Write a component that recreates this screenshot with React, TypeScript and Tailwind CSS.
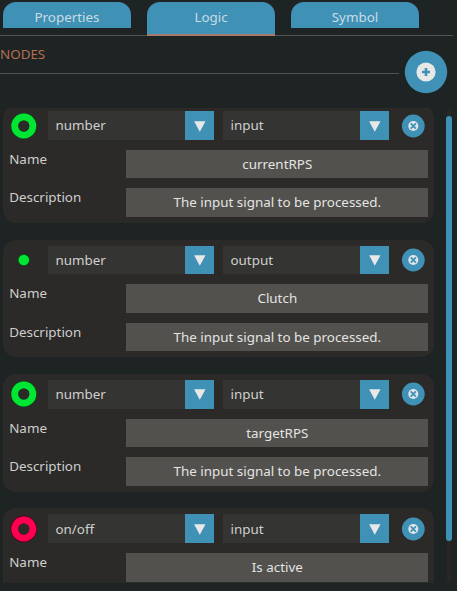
type NodeData = { type: string; mode: 'input' | 'output'; name: string; description?: string; on?: boolean };

const nodes: NodeData[] = [
  { type: 'number', mode: 'input', name: 'currentRPS', description: 'The input signal to be processed.' },
  { type: 'number', mode: 'output', name: 'Clutch', description: 'The input signal to be processed.' },
  { type: 'number', mode: 'input', name: 'targetRPS', description: 'The input signal to be processed.' },
  { type: 'on/off', mode: 'input', name: 'Is active', on: true },
];

function NodeIcon({ node }: { node: NodeData }) {
  const color = node.on ? '#ff0050' : '#00e632';
  const edge = node.on ? '#4a0a20' : '#0b4a1a';
  return (
    <svg viewBox="0 0 28 28" className="h-7 w-7 shrink-0">
      {node.mode === 'input' ? (
        <>
          <circle cx="13.8" cy="14" r="13.4" fill={edge} opacity={node.on ? 1 : 0.6} />
          <circle cx="13.8" cy="14" r="9" fill="none" stroke={color} strokeWidth="7" />
          <circle cx="13.8" cy="14" r="5.5" fill="#2b2a28" />
        </>
      ) : (
        <>
          <circle cx="13.8" cy="14" r="6.4" fill={edge} opacity="0.7" />
          <circle cx="13.8" cy="14" r="5.3" fill={color} />
        </>
      )}
    </svg>
  );
}

function Dropdown({ value }: { value: string }) {
  return (
    <div className="flex h-full w-[166px] shrink-0 bg-[#343432]">
      <span className="flex flex-1 items-center pb-[0.4px] pl-[7.5px] text-[#cfcfcd]">{value}</span>
      <span className="flex w-[28.7px] items-center justify-center bg-[#4091b6]">
        <svg viewBox="0 0 12 12" className="h-3 w-3">
          <path d="M0.1 1.2H11.5L5.8 11.8Z" fill="#e8e8e8" />
        </svg>
      </span>
    </div>
  );
}

function Field({ label, value }: { label: string; value: string }) {
  return (
    <div className="flex h-[28.7px]">
      <span className="w-[123px] pl-[6.2px] leading-[18px] text-[#cfcfcd]">{label}</span>
      <span className="flex w-[302px] items-center justify-center bg-[#52514e] pl-[0.6px] text-[#e4e4e2]">{value}</span>
    </div>
  );
}

function NodeCard({ node }: { node: NodeData }) {
  return (
    <div className="flex h-[117.6px] w-[431px] shrink-0 flex-col gap-[9.7px] rounded-[13px] bg-[#2b2a28] pt-[6px]">
      <div className="flex h-[28.9px] items-center pl-[6.7px]">
        <NodeIcon node={node} />
        <div className="ml-[10.3px] flex h-full gap-[9px]">
          <Dropdown value={node.type} />
          <Dropdown value={node.mode} />
        </div>
        <svg viewBox="0 0 24 24" className="ml-[12.3px] h-6 w-6">
          <circle cx="12.3" cy="12" r="11.4" fill="#4091b6" />
          <circle cx="12.3" cy="12" r="5" fill="#e2e6e8" />
          <path d="M9.7 9.4L14.9 14.6M14.9 9.4L9.7 14.6" stroke="#4091b6" strokeWidth="1.8" />
        </svg>
      </div>
      <Field label="Name" value={node.name} />
      {node.description && <Field label="Description" value={node.description} />}
    </div>
  );
}

export default function App() {
  return (
    <div className="h-[591px] w-[457px] overflow-hidden bg-[#1e2323] font-['Noto_Sans',sans-serif] text-[13.4px]">
      <div className="flex h-9 w-[453px] items-start gap-4 border-b border-[#505454] pt-[2px] pl-[3px] text-[#c8dce4]">
        <div className="flex h-[26px] w-32 justify-center rounded-t-[13px] bg-[#4091b6] pt-[6px] leading-[18px]">Properties</div>
        <div className="flex h-[34px] w-32 justify-center rounded-t-[13px] border-b-2 border-[#a77b6c] bg-[#4091b6] pt-[6px] leading-[18px]">Logic</div>
        <div className="flex h-[26px] w-32 justify-center rounded-t-[13px] bg-[#4091b6] pt-[6px] leading-[18px]">Symbol</div>
      </div>
      <div className="flex h-[72px] items-start">
        <div className="h-[38px] w-[399px] border-b border-[#505454] pt-[9px] leading-[18px] text-[#b56e4e]">NODES</div>
        <svg viewBox="0 0 44 44" className="mt-[14px] ml-[5px] h-11 w-11">
          <circle cx="22" cy="22" r="21.2" fill="#4091b6" />
          <circle cx="22" cy="22" r="9.6" fill="#e8e8e8" />
          <path d="M22 18V26M18 22H26" stroke="#4091b6" strokeWidth="2.6" />
        </svg>
      </div>
      <div className="flex h-[475px] overflow-hidden pl-[3px]">
        <div className="-mt-[2.8px] flex w-[431px] flex-col gap-[16.8px]">
          {nodes.map((node) => (
            <NodeCard key={node.name} node={node} />
          ))}
        </div>
        <div className="mt-[1px] ml-[12px] flex h-[473px] w-[6px] justify-center bg-[linear-gradient(90deg,transparent_1px,#272726_1px,#272726_5px,transparent_5px)] pt-[6.5px]">
          <div className="h-[425px] w-[6px] rounded-full bg-[#4091b6]" />
        </div>
      </div>
    </div>
  );
}
